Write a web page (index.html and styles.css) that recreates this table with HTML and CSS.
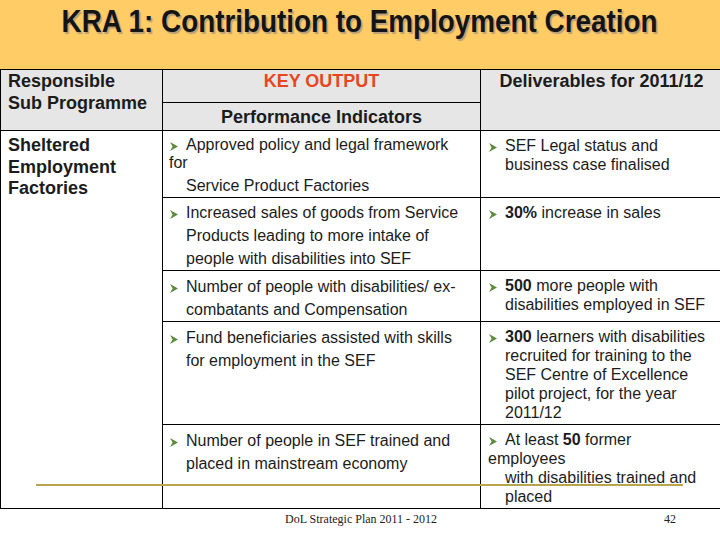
FILE: index.html
```html
<!DOCTYPE html>
<html lang="en">
<head>
<meta charset="utf-8">
<title>KRA 1: Contribution to Employment Creation</title>
<link rel="stylesheet" href="styles.css">
</head>
<body>
<div class="slide">
  <header class="title-band">
    <h1 class="title">KRA 1: Contribution to Employment Creation</h1>
  </header>

  <table class="kra">
    <colgroup>
      <col class="c1"><col class="c2"><col class="c3">
    </colgroup>
    <thead>
      <tr class="hrow1">
        <th class="h-sub" rowspan="2">Responsible<br>Sub Programme</th>
        <th class="h-key">KEY OUTPUT</th>
        <th class="h-del" rowspan="2">Deliverables for 2011/12</th>
      </tr>
      <tr class="hrow2">
        <th class="h-perf">Performance Indicators</th>
      </tr>
    </thead>
    <tbody>
      <tr class="r1">
        <td class="prog" rowspan="5">Sheltered<br>Employment<br>Factories</td>
        <td class="ind">
          <p class="flat"><span class="bul"><svg viewBox="0 0 8 9" width="8" height="9"><polygon points="0,0 8,4.5 0,9 2.6,4.5"/></svg></span>Approved policy and legal framework<br>for</p>
          <p class="cont">Service Product Factories</p>
        </td>
        <td class="del">
          <p class="item"><span class="bul"><svg viewBox="0 0 8 9" width="8" height="9"><polygon points="0,0 8,4.5 0,9 2.6,4.5"/></svg></span>SEF Legal status and business case finalised</p>
        </td>
      </tr>
      <tr class="r2">
        <td class="ind">
          <p class="item"><span class="bul"><svg viewBox="0 0 8 9" width="8" height="9"><polygon points="0,0 8,4.5 0,9 2.6,4.5"/></svg></span>Increased sales of goods from Service Products leading to more intake of people with disabilities into SEF</p>
        </td>
        <td class="del">
          <p class="item"><span class="bul"><svg viewBox="0 0 8 9" width="8" height="9"><polygon points="0,0 8,4.5 0,9 2.6,4.5"/></svg></span><b>30%</b> increase in sales</p>
        </td>
      </tr>
      <tr class="r3">
        <td class="ind">
          <p class="item"><span class="bul"><svg viewBox="0 0 8 9" width="8" height="9"><polygon points="0,0 8,4.5 0,9 2.6,4.5"/></svg></span>Number of people with disabilities/ ex-combatants and Compensation</p>
        </td>
        <td class="del">
          <p class="item"><span class="bul"><svg viewBox="0 0 8 9" width="8" height="9"><polygon points="0,0 8,4.5 0,9 2.6,4.5"/></svg></span><b>500</b> more people with disabilities employed in SEF</p>
        </td>
      </tr>
      <tr class="r4">
        <td class="ind">
          <p class="item"><span class="bul"><svg viewBox="0 0 8 9" width="8" height="9"><polygon points="0,0 8,4.5 0,9 2.6,4.5"/></svg></span>Fund beneficiaries assisted with skills for employment in the SEF</p>
        </td>
        <td class="del">
          <p class="item"><span class="bul"><svg viewBox="0 0 8 9" width="8" height="9"><polygon points="0,0 8,4.5 0,9 2.6,4.5"/></svg></span><b>300</b> learners with disabilities recruited for training to the SEF Centre of Excellence pilot project, for the year 2011/12</p>
        </td>
      </tr>
      <tr class="r5">
        <td class="ind">
          <p class="item"><span class="bul"><svg viewBox="0 0 8 9" width="8" height="9"><polygon points="0,0 8,4.5 0,9 2.6,4.5"/></svg></span>Number of people in SEF trained and placed in mainstream economy</p>
        </td>
        <td class="del">
          <p class="flat"><span class="bul"><svg viewBox="0 0 8 9" width="8" height="9"><polygon points="0,0 8,4.5 0,9 2.6,4.5"/></svg></span>At least <b>50</b> former<br>employees</p>
          <p class="cont">with disabilities trained and placed</p>
        </td>
      </tr>
    </tbody>
  </table>

  <div class="gold-rule"></div>

  <footer class="foot">
    <span class="foot-title">DoL Strategic Plan 2011 - 2012</span>
    <span class="foot-page">42</span>
  </footer>
</div>
</body>
</html>
```

FILE: styles.css
```css
* { box-sizing: border-box; }

html, body {
  margin: 0;
  padding: 0;
  background: #ffffff;
}

.slide {
  position: relative;
  width: 720px;
  height: 540px;
  overflow: hidden;
  font-family: "Liberation Sans", Arial, sans-serif;
  color: #1c1c1c;
  background: #ffffff;
}

/* Title band */
.title-band {
  height: 69px;
  background: #ffcc66;
  display: flex;
  justify-content: center;
  padding-top: 3px;
}

.title {
  margin: 0;
  font-size: 32px;
  line-height: 36px;
  font-weight: bold;
  color: #141414;
  white-space: nowrap;
  transform: scaleX(0.87);
  text-shadow: 2px 2px 1px #b8a07a;
}

/* Table */
.kra {
  width: 722px;
  border-collapse: collapse;
  table-layout: fixed;
}

.kra col.c1 { width: 162px; }
.kra col.c2 { width: 318px; }
.kra col.c3 { width: 242px; }

.kra th,
.kra td {
  border: 1px solid #000000;
  vertical-align: top;
  text-align: left;
  padding: 0;
}

.kra thead th {
  background: #e6e6e6;
  font-size: 18px;
  font-weight: bold;
  color: #1c1c1c;
}

.hrow1 { height: 33px; }
.hrow2 { height: 28px; }

.kra .h-sub {
  padding: 0 4px 0 7px;
  line-height: 22px;
}

.kra .h-key {
  color: #e8461e;
  text-align: center;
  line-height: 22px;
}

.kra .h-perf {
  text-align: center;
  line-height: 26px;
  vertical-align: middle;
}

.kra .h-del {
  text-align: center;
  line-height: 22px;
}

/* body rows */
.r1 { height: 67px; }
.r2 { height: 72px; }
.r3 { height: 50px; }
.r4 { height: 103px; }
.r5 { height: 84px; }

.kra .prog {
  font-size: 18px;
  font-weight: bold;
  line-height: 21.5px;
  padding: 4px 4px 0 7px;
}

.kra .ind {
  font-size: 16px;
  line-height: 23px;
  padding: 4px 6px 0 6px;
}

.kra .r2 .ind {
  padding-top: 3px;
}

.kra .del {
  font-size: 16px;
  line-height: 19px;
  padding: 5px 4px 0 7px;
}

.kra p {
  margin: 0;
}

.item {
  padding-left: 17px;
  text-indent: -17px;
}

.r1 .ind .flat {
  line-height: 18px;
  padding-top: 1px;
}

.cont {
  padding-left: 17px;
}

.r1 .ind .cont {
  margin-top: 3px;
  line-height: 22px;
}

.bul {
  display: inline-block;
  width: 17px;
  text-indent: 0;
  vertical-align: baseline;
}

.bul svg {
  display: block;
  margin-left: 1px;
  margin-bottom: -1px;
  fill: #5a8a3a;
}

.kra b {
  font-weight: bold;
}

/* decorative gold line over the table */
.gold-rule {
  position: absolute;
  left: 36px;
  top: 484px;
  width: 647px;
  height: 2px;
  background: #b8a44c;
}

/* footer */
.foot {
  position: relative;
  height: 31px;
  font-family: "Liberation Serif", "Times New Roman", serif;
  font-size: 12px;
  color: #222222;
}

.foot-title {
  position: absolute;
  left: 285px;
  top: 3px;
}

.foot-page {
  position: absolute;
  left: 664px;
  top: 3px;
}
```
